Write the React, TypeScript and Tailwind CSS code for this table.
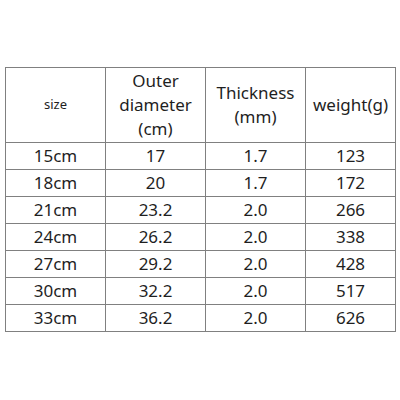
const rows = [
  ["15cm", "17", "1.7", "123"],
  ["18cm", "20", "1.7", "172"],
  ["21cm", "23.2", "2.0", "266"],
  ["24cm", "26.2", "2.0", "338"],
  ["27cm", "29.2", "2.0", "428"],
  ["30cm", "32.2", "2.0", "517"],
  ["33cm", "36.2", "2.0", "626"],
];

export default function App() {
  return (
    <div className="w-[400px] h-[400px] bg-white pt-[67px] pl-[5px] font-['Noto_Sans',sans-serif] text-[#1f1f1f]">
      <table className="table-fixed border-collapse w-[390px]">
        <colgroup>
          <col className="w-[100px]" />
          <col className="w-[100px]" />
          <col className="w-[100px]" />
          <col className="w-[90px]" />
        </colgroup>
        <thead>
          <tr className="h-[75px]">
            <th className="border border-[#808080] font-normal text-[13px]">size</th>
            <th className="border border-[#808080] font-normal text-[17px] leading-[24px]">
              Outer
              <br />
              diameter
              <br />
              (cm)
            </th>
            <th className="border border-[#808080] font-normal text-[17px] leading-[24px]">
              Thickness
              <br />
              (mm)
            </th>
            <th className="border border-[#808080] font-normal text-[17px] leading-[24px]">weight(g)</th>
          </tr>
        </thead>
        <tbody>
          {rows.map((r) => (
            <tr key={r[0]} className="h-[27px]">
              {r.map((c, i) => (
                <td key={i} className="border border-[#808080] text-center text-[17px] leading-[24px] p-0">
                  {c}
                </td>
              ))}
            </tr>
          ))}
        </tbody>
      </table>
    </div>
  );
}
